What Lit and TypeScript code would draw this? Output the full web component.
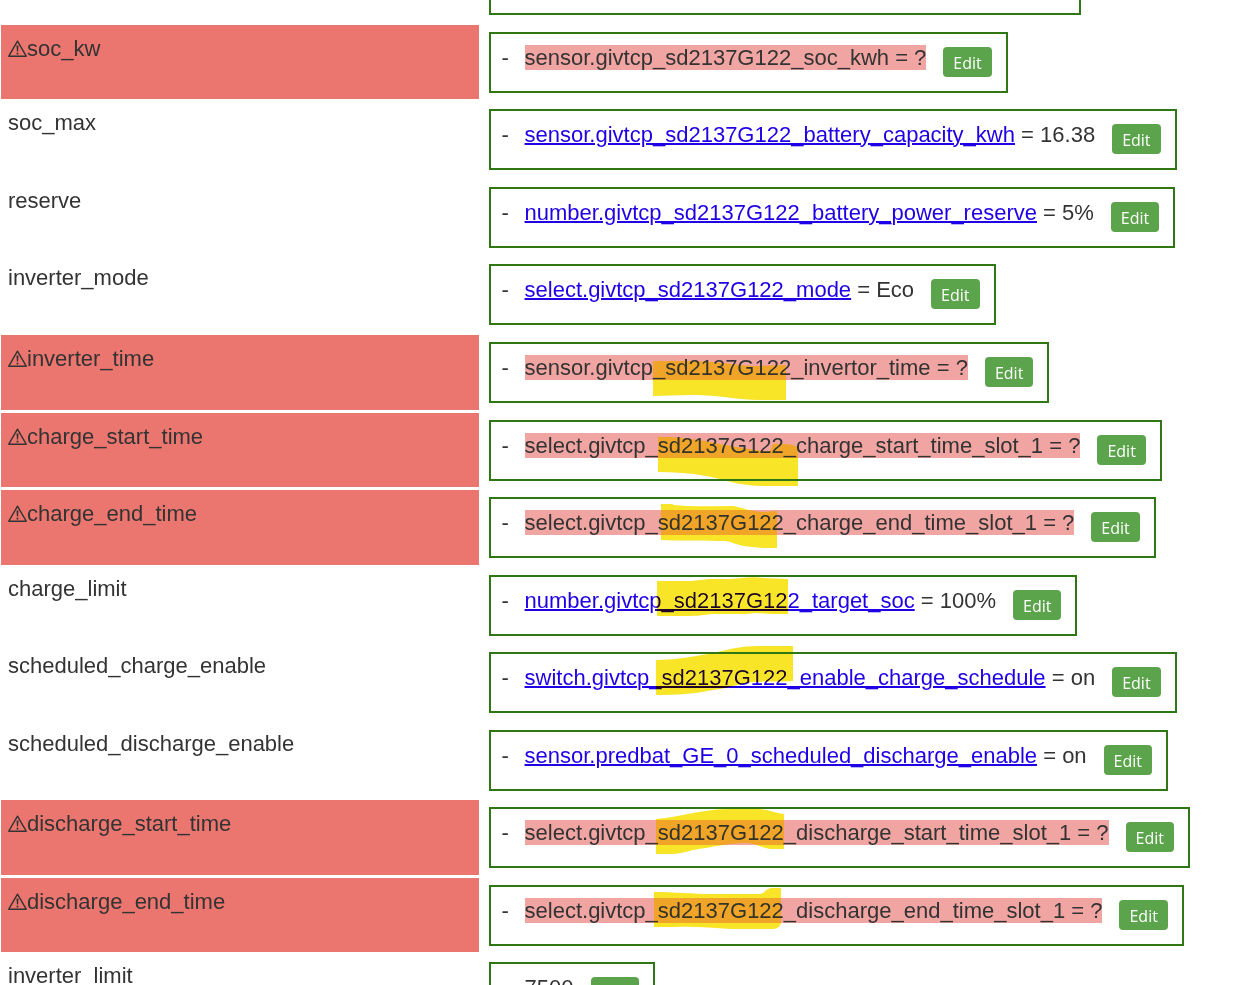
import { LitElement, html, css, svg, nothing } from "lit";
import { customElement } from "lit/decorators.js";

interface Setting {
  name: string;
  entity?: string;
  value: string;
  missing?: boolean;
  /** Marker stroke, in the coordinates of the value box. */
  mark?: string;
}

const SETTINGS: Setting[] = [
  { name: "soc_kw", entity: "sensor.givtcp_sd2137G122_soc_kwh", value: "?", missing: true },
  { name: "soc_max", entity: "sensor.givtcp_sd2137G122_battery_capacity_kwh", value: "16.38" },
  { name: "reserve", entity: "number.givtcp_sd2137G122_battery_power_reserve", value: "5%" },
  { name: "inverter_mode", entity: "select.givtcp_sd2137G122_mode", value: "Eco" },
  {
    name: "inverter_time", entity: "sensor.givtcp_sd2137G122_invertor_time", value: "?", missing: true,
    mark: "M162 17H196C230 17 246 22 266 22L295 21V56H270C245 56 230 51 200 51L162 52Z",
  },
  {
    name: "charge_start_time", entity: "select.givtcp_sd2137G122_charge_start_time_slot_1", value: "?", missing: true,
    mark: "M167 15H178C204 16 222 21 240 24C258 27 268 29 279 29L282 22C290 21 302 22 307 25V64H272C248 64 232 57 215 54C199 51 183 50 167 50Z",
  },
  {
    name: "charge_end_time", entity: "select.givtcp_sd2137G122_charge_end_time_slot_1", value: "?", missing: true,
    mark: "M170 5H182V6C200 8 222 7 242 7C250 8 256 12 272 13L286 12V49H272C256 48 247 46 242 44C237 42 234 42 226 42C208 41 188 42 170 41Z",
  },
  {
    name: "charge_limit", entity: "number.givtcp_sd2137G122_target_soc", value: "100%",
    mark: "M166 4H196C206 4 212 2 222 2H240C250 1 262 -1 272 1L297 2V37H282C276 37 270 36 264 36C259 37 254 37 249 37H222C212 38 206 39 196 39H166Z",
  },
  {
    name: "scheduled_charge_enable", entity: "switch.givtcp_sd2137G122_enable_charge_schedule", value: "on",
    mark: "M165 6C184 6 200 3 222 -1C240 -5 250 -8 266 -8H302V27C290 28 276 27 262 28C247 30 238 34 222 36C204 40 186 41 165 41Z",
  },
  { name: "scheduled_discharge_enable", entity: "sensor.predbat_GE_0_scheduled_discharge_enable", value: "on" },
  {
    name: "discharge_start_time", entity: "select.givtcp_sd2137G122_discharge_start_time_slot_1", value: "?", missing: true,
    mark: "M165 10C178 9 190 6 202 4C214 2 226 0 238 0H268C278 1 284 4 293 5V40H279C268 38 264 34 254 34C238 34 222 38 202 41C194 43 188 45 179 45H165Z",
  },
  {
    name: "discharge_end_time", entity: "select.givtcp_sd2137G122_discharge_end_time_slot_1", value: "?", missing: true,
    mark: "M163 5C184 5 200 7 222 7H268C274 7 274 2 280 1H290V36C289 40 286 42 280 42H240C220 41 204 39 184 40H163Z",
  },
  { name: "inverter_limit", value: "7500" },
];

@customElement("app-root")
export class AppRoot extends LitElement {
  static styles = css`
    :host {
      display: block;
      height: 100vh;
      overflow: hidden;
      isolation: isolate;
      background: #ffffff;
      color: #333333;
      font: 22px/25px "Liberation Sans", Arial, sans-serif;
    }
    .settings {
      width: 100%;
      padding-left: 1px;
      table-layout: fixed;
      border-collapse: separate;
      border-spacing: 0 3px;
      margin-top: -3px;
    }
    .row { height: 74px; }
    .row:nth-child(odd) { height: 75px; }
    .row:nth-child(n + 6) { height: 74px; }
    .row:nth-child(2n + 6) { height: 75px; }
    .row.previous { height: 22px; }
    .name, .value { padding: 0; vertical-align: top; }
    .name {
      width: 38.7%;
      box-sizing: border-box;
      padding: 8px 7px 0;
      text-align: left;
      font-weight: 400;
    }
    .value { padding: 7px 0 6px 10px; }
    .missing .name { padding-top: 11px; background: #eb766f; }
    .label { display: flex; }
    .warning { width: 19px; height: 18px; margin-top: 4px; flex: none; }
    .box {
      position: relative;
      display: flex;
      align-items: flex-start;
      box-sizing: border-box;
      width: fit-content;
      height: 61px;
      padding: 11px 14px 0 11px;
      border: 2px solid #2f7614;
      white-space: nowrap;
    }
    .previous .value { padding: 0 0 7px 10px; }
    .previous .box { width: 592px; max-width: 100%; height: 15px; padding: 0; border-top: 0; }
    .dash { width: 23px; }
    .missing .entity { background: #f0a5a2; }
    .link { color: #1f00e6; text-decoration-thickness: 2px; }
    .edit {
      height: 30px;
      margin: 2px 0 0 17px;
      padding: 1px 10px 0;
      border: 0;
      border-radius: 4px;
      background: #5ca44c;
      color: #ffffff;
      font: 16px/22px "Open Sans", "Noto Sans", sans-serif;
      cursor: pointer;
    }
    .mark {
      position: absolute;
      left: 0;
      top: 0;
      width: 1px;
      height: 1px;
      overflow: visible;
      fill: #f8e528;
      mix-blend-mode: darken;
      pointer-events: none;
    }
  `;

  private warning() {
    return html`<svg class="warning" viewBox="0 0 19 18" role="img" aria-label="Warning">
      <path d="M9.5 1.2L18.2 16.2H0.8Z" fill="none" stroke="#333" stroke-width="1.4" stroke-linejoin="round" />
      <path d="M8.5 5.5H10.5L10.1 11.6H8.9ZM8.6 12.7H10.4V14.5H8.6Z" fill="#333" />
    </svg>`;
  }

  private entity(s: Setting) {
    if (!s.entity) return html`<span>${s.value}</span>`;
    if (s.missing) return html`<span class="entity">${s.entity} = ${s.value}</span>`;
    return html`<span><a class="link" href="#${s.entity}">${s.entity}</a> = ${s.value}</span>`;
  }

  private row(s: Setting) {
    return html`<tr class="row ${s.missing ? "missing" : ""}">
      <th class="name" scope="row"><div class="label">${s.missing ? this.warning() : nothing}<span>${s.name}</span></div></th>
      <td class="value">
        <div class="box">
          <span class="dash">-</span>${this.entity(s)}
          <button class="edit" type="button">Edit</button>
          ${s.mark ? html`<svg class="mark" aria-hidden="true">${svg`<path d=${s.mark} />`}</svg>` : nothing}
        </div>
      </td>
    </tr>`;
  }

  render() {
    return html`<table class="settings">
      <tbody>
        <tr class="row previous">
          <td class="name"></td>
          <td class="value"><div class="box"></div></td>
        </tr>
        ${SETTINGS.map((s) => this.row(s))}
      </tbody>
    </table>`;
  }
}
